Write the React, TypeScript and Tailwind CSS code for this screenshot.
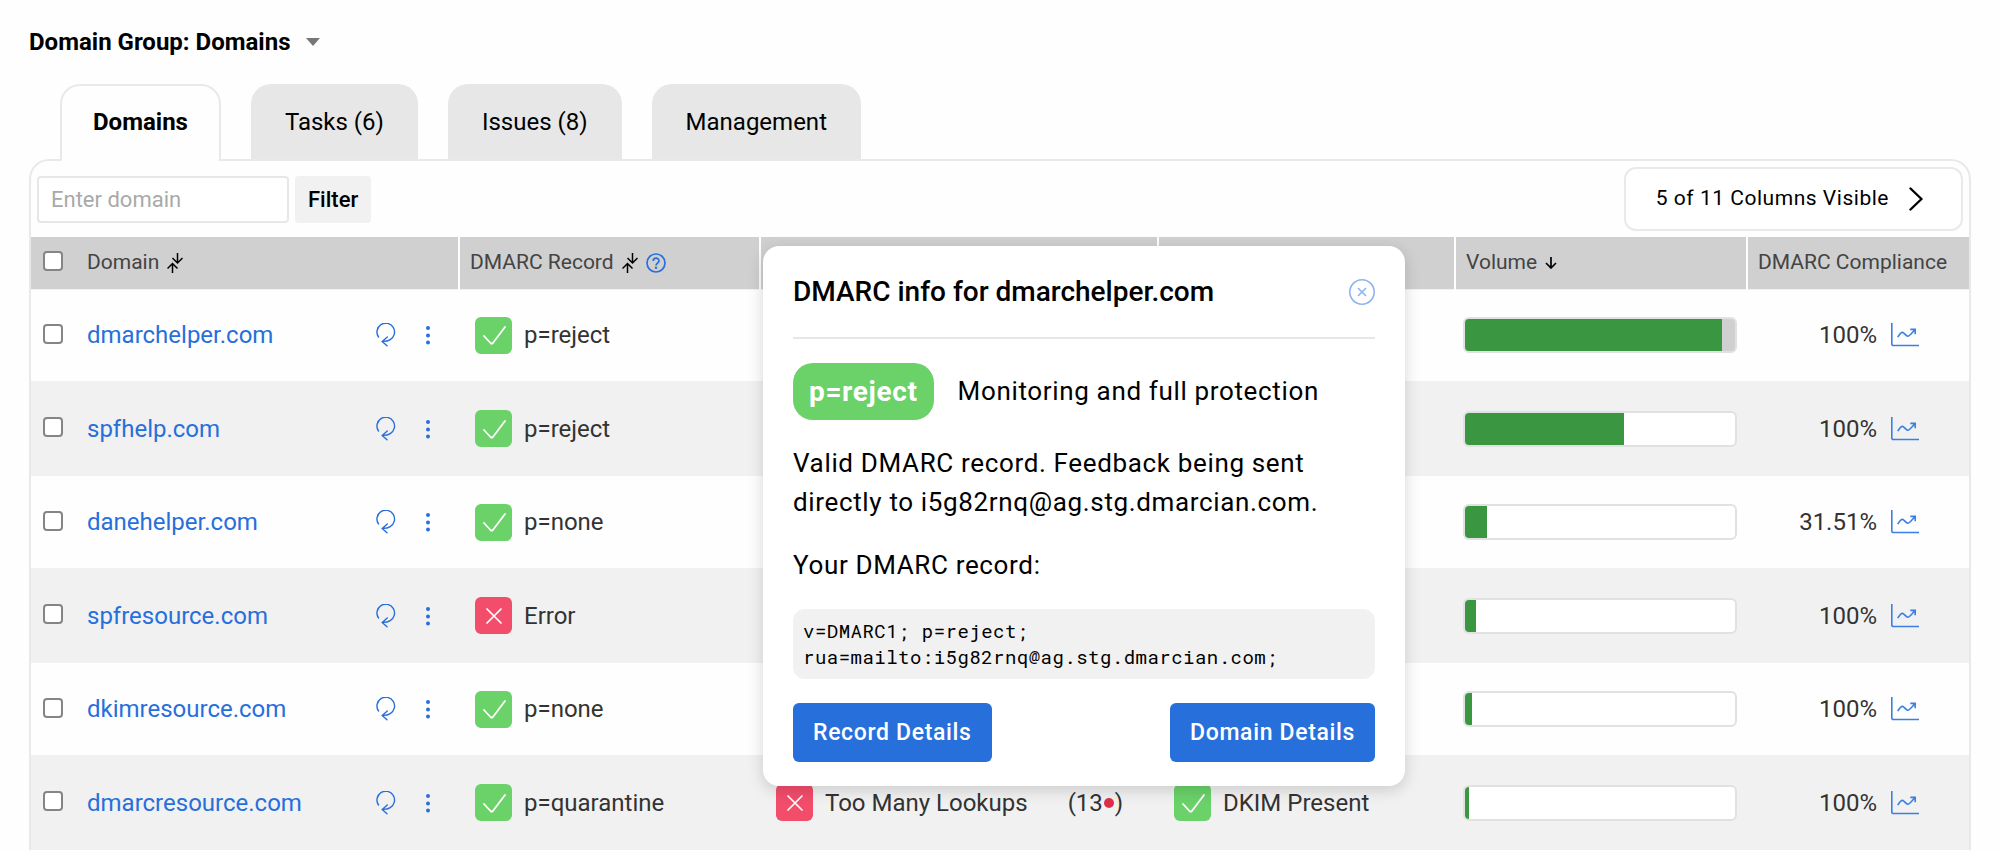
import React from 'react';

type Status = 'ok' | 'error';

interface Check {
    status: Status;
    label: string;
    lookups?: number;
}

interface DomainRow {
    name: string;
    dmarc: Check;
    spf?: Check;
    dkim?: Check;
    volume: number;
    full?: boolean;
    compliance: string;
}

const rows: DomainRow[] = [
    { name: 'dmarchelper.com', dmarc: { status: 'ok', label: 'p=reject' }, volume: 95, full: true, compliance: '100%' },
    { name: 'spfhelp.com', dmarc: { status: 'ok', label: 'p=reject' }, volume: 59, compliance: '100%' },
    { name: 'danehelper.com', dmarc: { status: 'ok', label: 'p=none' }, volume: 8, compliance: '31.51%' },
    { name: 'spfresource.com', dmarc: { status: 'error', label: 'Error' }, volume: 4, compliance: '100%' },
    { name: 'dkimresource.com', dmarc: { status: 'ok', label: 'p=none' }, volume: 2.5, compliance: '100%' },
    {
        name: 'dmarcresource.com',
        dmarc: { status: 'ok', label: 'p=quarantine' },
        spf: { status: 'error', label: 'Too Many Lookups', lookups: 13 },
        dkim: { status: 'ok', label: 'DKIM Present' },
        volume: 1.5,
        compliance: '100%'
    }
];

const tabs = ['Domains', 'Tasks (6)', 'Issues (8)', 'Management'];

function SortIcon() {
    return (
        <svg className="h-5 w-4 shrink-0" viewBox="0 0 16 20" fill="none" stroke="#000" strokeWidth="1.5">
            <path d="M10.5 0V9.5M5.5 5l5 5 5-5M5.5 20V10.5M.5 15.5l5-5 5 5" />
        </svg>
    );
}

function ArrowDownIcon() {
    return (
        <svg className="h-3 w-3 shrink-0" viewBox="0 0 12 12" fill="none" stroke="#000" strokeWidth="1.7">
            <path d="M6 0v11M1 6l5 5 5-5" />
        </svg>
    );
}

function HelpIcon() {
    return (
        <svg className="block h-5 w-5" viewBox="0 0 20 20" fill="none" stroke="#276fdb" strokeWidth="1.7">
            <circle cx="10" cy="10" r="9" />
            <path d="M7.2 8.1c0-3.9 5.8-3.7 5.8-.3 0 2.3-3 2.3-3 4.7" />
            <circle cx="10" cy="14.8" r="1.2" fill="#276fdb" stroke="none" />
        </svg>
    );
}

function RefreshIcon() {
    return (
        <svg className="h-6 w-5" viewBox="0 0 20 24" fill="none" stroke="#276fdb" strokeWidth="1.4" strokeLinecap="round">
            <path d="M2.5 14A8.8 8.8 0 1 1 14.2 16.6Q11.5 18.6 6.2 18.4M11.3 14L6.2 18.4L11 22.8" />
        </svg>
    );
}

function DotsIcon() {
    return (
        <svg className="h-5 w-1" viewBox="0 0 4 20" fill="#276fdb">
            <circle cx="2" cy="3" r="2" />
            <circle cx="2" cy="10.5" r="2" />
            <circle cx="2" cy="17.5" r="2" />
        </svg>
    );
}

function ChartIcon() {
    return (
        <svg className="h-6 w-7" viewBox="0 0 28 24" fill="none" stroke="#3b7fe6" strokeWidth="1.6">
            <path d="M.8 0v21a1.5 1.5 0 0 0 1.5 1.5H28" />
            <path d="M6.7 14.2C9 10.5 10.5 8.8 12 9.5S15 13.2 16.8 13.2C18.5 13.2 20 11 24 6.6M19.3 6.4h4.9V11.2" />
        </svg>
    );
}

function StatusBadge({ status }: { status: Status }) {
    if (status === 'error') {
        return (
            <span className="flex size-[37px] shrink-0 items-center justify-center rounded-md bg-[#f24d6b]">
                <svg className="size-4" viewBox="0 0 16 16" fill="none" stroke="#fff" strokeWidth="1.7" strokeLinecap="round">
                    <path d="M1 1l14 14M15 1L1 15" />
                </svg>
            </span>
        );
    }
    return (
        <span className="flex size-[37px] shrink-0 items-center justify-center rounded-md bg-[#6ad269]">
            <svg className="h-5 w-6" viewBox="0 0 24 20" fill="none" stroke="#fff" strokeWidth="1.8" strokeLinecap="round">
                <path d="M2 11l6.5 7q1.2 1.2 2.4 0L23 2" />
            </svg>
        </span>
    );
}

function CheckCell({ check }: { check?: Check }) {
    if (!check) {
        return <td />;
    }
    return (
        <td className="pl-4">
            <div className="flex items-center gap-3 whitespace-nowrap">
                <StatusBadge status={check.status} />
                <span>{check.label}</span>
                {check.lookups && (
                    <span className="ml-7 flex items-center">
                        ({check.lookups}
                        <i className="mx-px size-[10px] rounded-full bg-[#dc3048]" />)
                    </span>
                )}
            </div>
        </td>
    );
}

function Checkbox({ label }: { label: string }) {
    return (
        <input
            type="checkbox"
            aria-label={label}
            className="mb-[3px] size-5 shrink-0 appearance-none rounded border-2 border-[#858585] bg-white"
        />
    );
}

function DmarcDialog() {
    return (
        <div
            role="dialog"
            aria-labelledby="dialog-title"
            className="absolute top-[85px] left-[732px] w-[642px] rounded-2xl bg-white px-[30px] pt-7 pb-6 text-[26px] tracking-wide shadow-[0_4px_16px_rgba(0,0,0,0.16)]"
        >
            <div className="flex items-center justify-between border-b-2 border-[#e7e7e8] pb-[27px]">
                <h2 id="dialog-title" className="text-[28px] leading-9 font-medium tracking-normal">
                    DMARC info for dmarchelper.com
                </h2>
                <button type="button" aria-label="Close">
                    <svg className="size-[26px]" viewBox="0 0 26 26" fill="none" stroke="#8db4ee" strokeWidth="1.6">
                        <circle cx="13" cy="13" r="12.2" />
                        <path d="M9 9l8 8M17 9l-8 8" />
                    </svg>
                </button>
            </div>
            <div className="mt-6 flex items-center gap-6">
                <span className="rounded-[20px] bg-[#6ad269] px-4 py-[9px] text-[28px] leading-[39px] font-bold text-white">
                    p=reject
                </span>
                <span>Monitoring and full protection</span>
            </div>
            <p className="mt-6 leading-[39px]">
                Valid DMARC record. Feedback being sent directly to i5g82rnq@ag.stg.dmarcian.com.
            </p>
            <p className="mt-6 leading-[39px]">Your DMARC record:</p>
            <pre className="mt-6 rounded-xl bg-[#f1f1f1] px-[10px] py-[9px] font-['Roboto_Mono','DejaVu_Sans_Mono',monospace] text-[19px] leading-[26px] tracking-wide">
                {'v=DMARC1; p=reject;\nrua=mailto:i5g82rnq@ag.stg.dmarcian.com;'}
            </pre>
            <div className="mt-6 flex justify-between text-[23px] leading-[59px] font-medium text-white">
                <button type="button" className="rounded-md bg-[#276fdb] px-5">Record Details</button>
                <button type="button" className="rounded-md bg-[#276fdb] px-5">Domain Details</button>
            </div>
        </div>
    );
}

export default function App() {
    return (
        <div className="min-h-screen overflow-hidden bg-[#fefefe] px-[29px] pt-6 font-[Roboto,sans-serif] text-black">
            <button type="button" className="flex items-center gap-4 text-[24px] leading-9 font-bold">
                Domain Group: Domains
                <svg className="h-2 w-[14px]" viewBox="0 0 14 8" fill="#777">
                    <path d="M0 0h14L7 8z" />
                </svg>
            </button>

            <div role="tablist" className="mt-6 flex gap-[30px] pl-[31px] text-[24px]">
                {tabs.map((tab, i) => (
                    <button
                        key={tab}
                        type="button"
                        role="tab"
                        aria-selected={i === 0}
                        className={
                            i === 0
                                ? 'relative z-10 -mb-[2px] h-[77px] rounded-t-[20px] border-2 border-b-0 border-[#e9e9ea] bg-[#fefefe] px-[31px] pb-1 font-bold'
                                : 'h-[75px] rounded-t-[20px] bg-[#e7e7e7] px-[34px]'
                        }
                    >
                        {tab}
                    </button>
                ))}
            </div>

            <div className="relative rounded-t-[20px] border-2 border-b-0 border-[#e9e9ea]">
                <div className="flex items-center px-[6px] py-[6px]">
                    <input
                        type="text"
                        aria-label="Enter domain"
                        placeholder="Enter domain"
                        className="h-[47px] w-[252px] rounded border-2 border-[#e7e7e8] bg-white px-3 text-[22px] placeholder:text-[#a9a9a9]"
                    />
                    <button type="button" className="ml-[6px] h-[47px] rounded bg-[#f1f1f1] px-[13px] text-[22px] font-medium">
                        Filter
                    </button>
                    <button
                        type="button"
                        className="ml-auto flex h-16 items-center gap-5 rounded-xl border-2 border-[#e9e9ea] bg-white pr-[38px] pl-[30px] text-[21px] tracking-wide"
                    >
                        5 of 11 Columns Visible
                        <svg className="h-6 w-[14px]" viewBox="0 0 14 24" fill="none" stroke="#000" strokeWidth="2.4" strokeLinecap="round" strokeLinejoin="round">
                            <path d="M1.5 1.5L12.5 12L1.5 22.5" />
                        </svg>
                    </button>
                </div>

                <table className="w-full table-fixed text-left text-[#333]">
                    <colgroup>
                        <col className="w-[428px]" />
                        <col className="w-[301px]" />
                        <col className="w-[398px]" />
                        <col className="w-[297px]" />
                        <col className="w-[292px]" />
                        <col />
                    </colgroup>
                    <thead>
                        <tr className="h-[52px] border-b border-[#f1f1f1] bg-[#d0d0d1] text-[21px] text-[#444] *:border-r-2 *:border-[#fefefe] *:font-normal *:whitespace-nowrap *:last:border-r-0">
                            <th className="pl-3">
                                <div className="flex items-center">
                                    <Checkbox label="Select all domains" />
                                    <span className="mr-2 ml-6">Domain</span>
                                    <SortIcon />
                                </div>
                            </th>
                            <th className="pl-[10px]">
                                <div className="flex items-center">
                                    <span className="mr-2">DMARC Record</span>
                                    <SortIcon />
                                    <button type="button" aria-label="About DMARC records" className="ml-2">
                                        <HelpIcon />
                                    </button>
                                </div>
                            </th>
                            <th aria-label="SPF" />
                            <th aria-label="DKIM" />
                            <th className="pl-[10px]">
                                <div className="flex items-center gap-2">
                                    Volume
                                    <ArrowDownIcon />
                                </div>
                            </th>
                            <th className="pl-[10px]">DMARC Compliance</th>
                        </tr>
                    </thead>
                    <tbody className="text-[24px]">
                        {rows.map((row) => (
                            <tr key={row.name} className="h-[92px] even:h-[95px] even:bg-[#f1f1f1]">
                                <td className="pl-3">
                                    <div className="flex items-center">
                                        <Checkbox label={`Select ${row.name}`} />
                                        <a href="#" className="ml-6 text-[#276fdb]">{row.name}</a>
                                        <button type="button" aria-label="Refresh" className="ml-auto">
                                            <RefreshIcon />
                                        </button>
                                        <button type="button" aria-label="More actions" className="mr-[29px] ml-[30px]">
                                            <DotsIcon />
                                        </button>
                                    </div>
                                </td>
                                <CheckCell check={row.dmarc} />
                                <CheckCell check={row.spf} />
                                <CheckCell check={row.dkim} />
                                <td className="pr-[10px] pl-2">
                                    <div className={`h-9 overflow-hidden rounded-md border-2 border-[#e1e1e1] ${row.full ? 'bg-[#d0d0d1]' : 'bg-white'}`}>
                                        <div className="h-full bg-[#3a9641]" style={{ width: `${row.volume}%` }} />
                                    </div>
                                </td>
                                <td className="pr-[50px]">
                                    <div className="flex items-center justify-end gap-[14px]">
                                        {row.compliance}
                                        <a href="#" aria-label={`${row.name} trend`}>
                                            <ChartIcon />
                                        </a>
                                    </div>
                                </td>
                            </tr>
                        ))}
                    </tbody>
                </table>

                <DmarcDialog />
            </div>
        </div>
    );
}
